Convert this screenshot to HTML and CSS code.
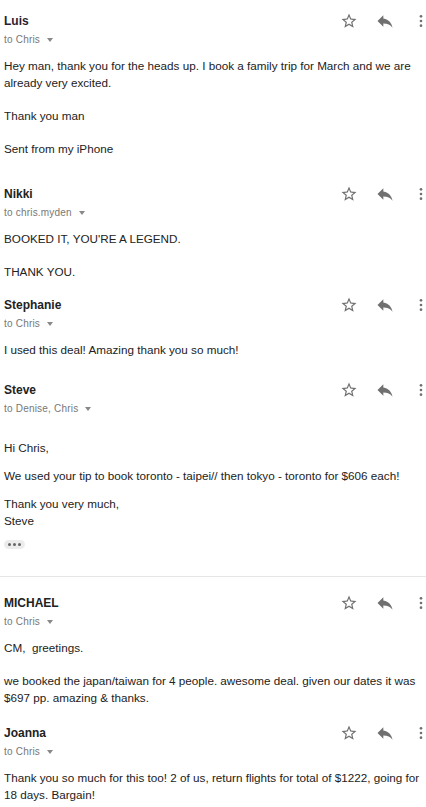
FILE: index.html
```html
<!DOCTYPE html>
<html lang="en">
<head>
    <meta charset="UTF-8">
    <meta name="viewport" content="width=device-width, initial-scale=1.0">
    <title>Replies</title>
    <link rel="stylesheet" href="styles.css">
</head>
<body>
    <div class="thread">
        <!-- Luis -->
        <div class="msg msg-first">
            <div class="msg-head">
                <span class="sender sender-dark">Luis</span>
                <div class="actions">
                    <svg class="ic-star" viewBox="0 0 24 24"><path d="M22 9.24l-7.19-.62L12 2 9.19 8.630 2 9.24l5.46 4.73L5.82 21 12 17.27 18.18 21l-1.63-7.03L22 9.24zM12 15.4l-3.76 2.27 1-4.28-3.32-2.88 4.38-.38L12 6.1l1.71 4.04 4.38.38-3.32 2.88 1 4.28L12 15.4z"/></svg>
                    <svg class="ic-reply" viewBox="0 0 24 24"><path d="M10 9V5l-7 7 7 7v-4.1c5 0 8.5 1.6 11 5.1-1-5-4-10-11-11z"/></svg>
                    <svg class="ic-more" viewBox="0 0 6 24"><circle cx="3" cy="5" r="2"/><circle cx="3" cy="12" r="2"/><circle cx="3" cy="19" r="2"/></svg>
                </div>
            </div>
            <div class="to">to Chris <span class="caret"></span></div>
            <div class="body">
                <p>Hey man, thank you for the heads up. I book a family trip for March and we are already very excited.</p>
                <p>Thank you man</p>
                <p>Sent from my iPhone</p>
            </div>
        </div>

        <!-- Nikki -->
        <div class="msg msg-nikki">
            <div class="msg-head">
                <span class="sender">Nikki</span>
                <div class="actions">
                    <svg class="ic-star" viewBox="0 0 24 24"><path d="M22 9.24l-7.19-.62L12 2 9.19 8.63 2 9.24l5.46 4.73L5.82 21 12 17.27 18.18 21l-1.63-7.03L22 9.24zM12 15.4l-3.76 2.27 1-4.28-3.32-2.88 4.38-.38L12 6.1l1.71 4.04 4.38.38-3.32 2.88 1 4.28L12 15.4z"/></svg>
                    <svg class="ic-reply" viewBox="0 0 24 24"><path d="M10 9V5l-7 7 7 7v-4.1c5 0 8.5 1.6 11 5.1-1-5-4-10-11-11z"/></svg>
                    <svg class="ic-more" viewBox="0 0 6 24"><circle cx="3" cy="5" r="2"/><circle cx="3" cy="12" r="2"/><circle cx="3" cy="19" r="2"/></svg>
                </div>
            </div>
            <div class="to">to chris.myden <span class="caret"></span></div>
            <div class="body">
                <p>BOOKED IT, YOU'RE A LEGEND.</p>
                <p>THANK YOU.</p>
            </div>
        </div>

        <!-- Stephanie -->
        <div class="msg msg-steph">
            <div class="msg-head">
                <span class="sender">Stephanie</span>
                <div class="actions">
                    <svg class="ic-star" viewBox="0 0 24 24"><path d="M22 9.24l-7.19-.62L12 2 9.19 8.63 2 9.24l5.46 4.73L5.82 21 12 17.27 18.18 21l-1.63-7.03L22 9.24zM12 15.4l-3.76 2.27 1-4.28-3.32-2.88 4.38-.38L12 6.1l1.71 4.04 4.38.38-3.32 2.88 1 4.28L12 15.4z"/></svg>
                    <svg class="ic-reply" viewBox="0 0 24 24"><path d="M10 9V5l-7 7 7 7v-4.1c5 0 8.5 1.6 11 5.1-1-5-4-10-11-11z"/></svg>
                    <svg class="ic-more" viewBox="0 0 6 24"><circle cx="3" cy="5" r="2"/><circle cx="3" cy="12" r="2"/><circle cx="3" cy="19" r="2"/></svg>
                </div>
            </div>
            <div class="to">to Chris <span class="caret"></span></div>
            <div class="body">
                <p>I used this deal! Amazing thank you so much!</p>
            </div>
        </div>

        <!-- Steve -->
        <div class="msg msg-steve">
            <div class="msg-head">
                <span class="sender">Steve</span>
                <div class="actions">
                    <svg class="ic-star" viewBox="0 0 24 24"><path d="M22 9.24l-7.19-.62L12 2 9.19 8.63 2 9.24l5.46 4.73L5.82 21 12 17.27 18.18 21l-1.63-7.03L22 9.24zM12 15.4l-3.76 2.27 1-4.28-3.32-2.88 4.38-.38L12 6.1l1.71 4.04 4.38.38-3.32 2.88 1 4.28L12 15.4z"/></svg>
                    <svg class="ic-reply" viewBox="0 0 24 24"><path d="M10 9V5l-7 7 7 7v-4.1c5 0 8.5 1.6 11 5.1-1-5-4-10-11-11z"/></svg>
                    <svg class="ic-more" viewBox="0 0 6 24"><circle cx="3" cy="5" r="2"/><circle cx="3" cy="12" r="2"/><circle cx="3" cy="19" r="2"/></svg>
                </div>
            </div>
            <div class="to">to Denise, Chris <span class="caret"></span></div>
            <div class="body body-loose">
                <p>Hi Chris,</p>
                <p>We used your tip to book toronto - taipei// then tokyo - toronto for $606 each!</p>
                <p>Thank you very much,<br>Steve</p>
            </div>
            <div class="trimmed"><span></span><span></span><span></span></div>
        </div>

        <hr class="divider">

        <!-- Michael -->
        <div class="msg msg-michael">
            <div class="msg-head">
                <span class="sender">MICHAEL</span>
                <div class="actions">
                    <svg class="ic-star" viewBox="0 0 24 24"><path d="M22 9.24l-7.19-.62L12 2 9.19 8.63 2 9.24l5.46 4.73L5.82 21 12 17.27 18.18 21l-1.63-7.03L22 9.24zM12 15.4l-3.76 2.27 1-4.28-3.32-2.88 4.38-.38L12 6.1l1.71 4.04 4.38.38-3.32 2.88 1 4.28L12 15.4z"/></svg>
                    <svg class="ic-reply" viewBox="0 0 24 24"><path d="M10 9V5l-7 7 7 7v-4.1c5 0 8.5 1.6 11 5.1-1-5-4-10-11-11z"/></svg>
                    <svg class="ic-more" viewBox="0 0 6 24"><circle cx="3" cy="5" r="2"/><circle cx="3" cy="12" r="2"/><circle cx="3" cy="19" r="2"/></svg>
                </div>
            </div>
            <div class="to">to Chris <span class="caret"></span></div>
            <div class="body">
                <p>CM,&nbsp; greetings.</p>
                <p>we booked the japan/taiwan for 4 people. awesome deal. given our dates it was $697 pp. amazing &amp; thanks.</p>
            </div>
        </div>

        <!-- Joanna -->
        <div class="msg msg-joanna">
            <div class="msg-head">
                <span class="sender">Joanna</span>
                <div class="actions">
                    <svg class="ic-star" viewBox="0 0 24 24"><path d="M22 9.24l-7.19-.62L12 2 9.19 8.63 2 9.24l5.46 4.73L5.82 21 12 17.27 18.18 21l-1.63-7.03L22 9.24zM12 15.4l-3.76 2.27 1-4.28-3.32-2.88 4.38-.38L12 6.1l1.71 4.04 4.38.38-3.32 2.88 1 4.28L12 15.4z"/></svg>
                    <svg class="ic-reply" viewBox="0 0 24 24"><path d="M10 9V5l-7 7 7 7v-4.1c5 0 8.5 1.6 11 5.1-1-5-4-10-11-11z"/></svg>
                    <svg class="ic-more" viewBox="0 0 6 24"><circle cx="3" cy="5" r="2"/><circle cx="3" cy="12" r="2"/><circle cx="3" cy="19" r="2"/></svg>
                </div>
            </div>
            <div class="to">to Chris <span class="caret"></span></div>
            <div class="body">
                <p>Thank you so much for this too! 2 of us, return flights for total of $1222, going for 18 days. Bargain!</p>
            </div>
        </div>
    </div>
</body>
</html>
```

FILE: styles.css
```css
body {
    margin: 0;
    padding: 0;
    background-color: #fff;
    font-family: "Liberation Sans", Arial, sans-serif;
    color: #222;
    overflow: hidden;
}
.thread {
    width: 426px;
}
.msg {
    padding: 0 0 0 4px;
}
.msg-first { padding-top: 11px; }
.msg-nikki { padding-top: 27px; }
.msg-steph { padding-top: 15px; }
.msg-steve { padding-top: 22px; }
.msg-michael { padding-top: 16px; }
.msg-joanna { padding-top: 17px; }

.msg-head {
    display: flex;
    align-items: center;
    justify-content: space-between;
    height: 20px;
}
.sender {
    font-size: 12px;
    font-weight: bold;
    color: #222;
}
.sender-dark {
    color: #2a1d33;
}
.actions {
    display: flex;
    align-items: center;
    fill: #707070;
}
.actions svg {
    display: block;
}
.ic-star {
    width: 18px;
    height: 18px;
}
.ic-reply {
    width: 20px;
    height: 20px;
    margin-left: 17px;
}
.ic-more {
    width: 4px;
    height: 16px;
    margin-left: 24px;
    margin-right: 3px;
}
.to {
    font-size: 10px;
    line-height: 18px;
    color: #777;
    letter-spacing: 0.2px;
}
.caret {
    display: inline-block;
    margin-left: 4px;
    vertical-align: middle;
    border-left: 3.5px solid transparent;
    border-right: 3.5px solid transparent;
    border-top: 4px solid #888;
}
.body {
    margin-top: 8px;
    font-size: 11.7px;
    line-height: 17px;
}
.body p {
    margin: 0 0 16px;
}
.body p:last-child {
    margin-bottom: 0;
}
.body-loose {
    margin-top: 21px;
}
.body-loose p {
    margin-bottom: 11px;
}
.trimmed {
    display: inline-flex;
    align-items: center;
    gap: 2px;
    margin-top: 11px;
    padding: 3px 4px;
    border-radius: 5px;
    background-color: #ececec;
}
.trimmed span {
    width: 3px;
    height: 3px;
    border-radius: 50%;
    background-color: #666;
}
.divider {
    border: 0;
    border-top: 1px solid #e6e6e6;
    margin: 26px 0 0;
}
```
